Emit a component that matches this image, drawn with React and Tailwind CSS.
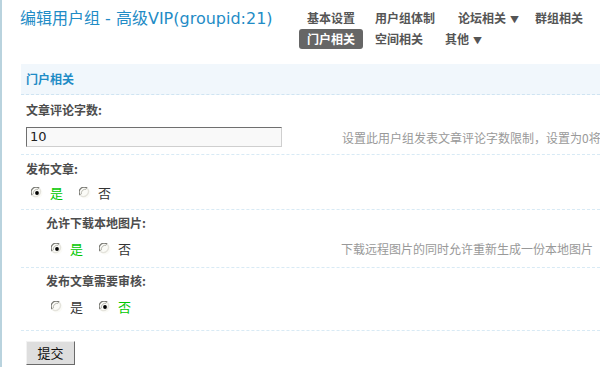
import React from 'react';

const CJK = 'font-["Noto_Sans_CJK_SC","DejaVu_Sans",sans-serif]';

function Radio({ checked }) {
  return (
    <svg width="12" height="12" viewBox="0 0 12 12" className="shrink-0">
      <circle cx="6" cy="6" r="5.5" fill="#fbfbf7" />
      <path d="M1.2 8.2 A5 5 0 0 1 8.2 1.2" fill="none" stroke="#7a7a74" strokeWidth="1.3" />
      <path d="M2.4 7.2 A4 4 0 0 1 7.2 2.4" fill="none" stroke="#b8b8b0" strokeWidth="1" />
      <path d="M8.4 1.4 A5 5 0 0 1 1.4 8.4" fill="none" stroke="#e4e3dc" strokeWidth="1.3" />
      {checked && <circle cx="6" cy="6" r="1.9" fill="#000" />}
    </svg>
  );
}

function YesNo({ yes }) {
  return (
    <div className="flex h-[20px] shrink-0 items-center">
      <Radio checked={yes} />
      <span className={`ml-[7px] text-[13px] ${yes ? 'text-[#00c800]' : 'text-[#333]'}`}>是</span>
      <span className="ml-[16px]"><Radio checked={!yes} /></span>
      <span className={`ml-[7px] text-[13px] ${!yes ? 'text-[#00c800]' : 'text-[#333]'}`}>否</span>
    </div>
  );
}

const navItem = 'h-[20px] px-2 leading-[20px] text-[12px] font-bold text-[#555] whitespace-nowrap';

export default function App() {
  return (
    <div className={`relative h-[367px] w-[600px] overflow-hidden border-l-2 border-[#b9d3de] bg-white ${CJK}`}>
      {/* Header */}
      <div className="flex h-[64px] pl-[18px]">
        <h1 className='mt-[8px] w-[279px] shrink-0 whitespace-nowrap font-["DejaVu_Sans","Noto_Sans_CJK_SC",sans-serif] text-[16px] leading-[22px] text-[#1f8cc6]'>
          编辑用户组 - 高级VIP(groupid:21)
        </h1>
        <div className="mt-[8px] flex w-[300px] flex-col gap-y-[1px]">
          <div className="flex">
            <span className={navItem}>基本设置</span>
            <span className={`${navItem} ml-[4px]`}>用户组体制</span>
            <span className={`${navItem} ml-[7px]`}>论坛相关<span className="ml-[4px] text-[9px]">▼</span></span>
            <span className={navItem}>群组相关</span>
          </div>
          <div className="flex">
            <span className={`${navItem} rounded-[3px] bg-[#666] text-white`}>门户相关</span>
            <span className={`${navItem} ml-[4px]`}>空间相关</span>
            <span className={`${navItem} ml-[6px]`}>其他<span className="ml-[4px] text-[9px]">▼</span></span>
          </div>
        </div>
      </div>

      <div className="pl-[19px]">
        {/* Section bar */}
        <div className="flex h-[31px] items-center border-b border-dashed border-[#cfe4f2] bg-[#f1f7fc] pl-[5px] text-[12px] font-bold text-[#1f8cc6]">
          门户相关
        </div>

        {/* 文章评论字数 */}
        <div className="flex h-[29px] items-center pl-[5px] text-[12px] font-bold text-[#4d4d4d]">文章评论字数:</div>
        <div className="flex h-[31px] items-start border-b border-dashed border-[#d8eaf5] pl-[5px] pt-[3px]">
          <div className="flex h-[20px] w-[256px] shrink-0 items-center border border-t-[#6f6f6f] border-l-[#6f6f6f] border-r-[#cfcfcf] border-b-[#cfcfcf] bg-[#f9f9f9] pl-[3px] font-['DejaVu_Sans',sans-serif] text-[13px] text-[#222]">
            10
          </div>
          <div className="ml-[60px] mt-[2px] whitespace-nowrap text-[12px] text-[#999]">
            设置此用户组发表文章评论字数限制，设置为0将
          </div>
        </div>

        {/* 发布文章 */}
        <div className="flex h-[28px] items-center pl-[5px] text-[12px] font-bold text-[#4d4d4d]">发布文章:</div>
        <div className="h-[27px] border-b border-dashed border-[#d8eaf5] pl-[10px]">
          <YesNo yes />
        </div>

        {/* 允许下载本地图片 */}
        <div className="flex h-[26px] items-center pl-[25px] text-[12px] font-bold text-[#4d4d4d]">允许下载本地图片:</div>
        <div className="flex h-[32px] items-start border-b border-dashed border-[#d8eaf5] pl-[30px] pt-[3px]">
          <YesNo yes />
          <div className="ml-[210px] mt-[1px] whitespace-nowrap text-[12px] text-[#999]">
            下载远程图片的同时允许重新生成一份本地图片
          </div>
        </div>

        {/* 发布文章需要审核 */}
        <div className="flex h-[26px] items-center pl-[25px] text-[12px] font-bold text-[#4d4d4d]">发布文章需要审核:</div>
        <div className="h-[37px] border-b border-dashed border-[#d8eaf5] pl-[30px] pt-[3px]">
          <YesNo yes={false} />
        </div>

        <div className="pl-[5px] pt-[8px]">
          <button className="h-[24px] w-[49px] border border-t-[#f2f2f2] border-l-[#f2f2f2] border-r-[#6a6a6a] border-b-[#6a6a6a] bg-[#dedede] text-[13px] text-[#111]">
            提交
          </button>
        </div>
      </div>
    </div>
  );
}
